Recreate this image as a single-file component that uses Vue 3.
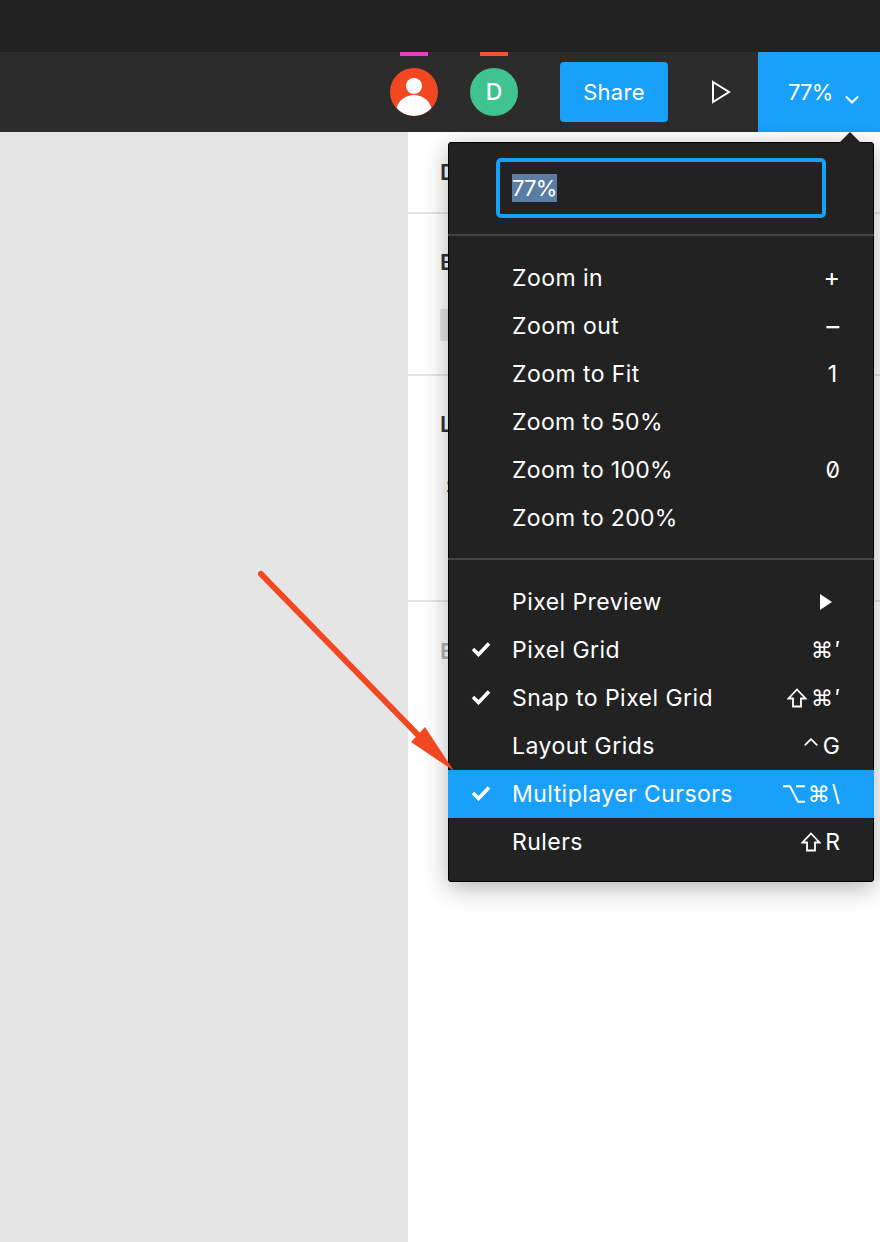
<script setup>
const groupA = [
  { label: 'Zoom in', key: '+', cls: 'op' },
  { label: 'Zoom out', key: '−', cls: 'op minus' },
  { label: 'Zoom to Fit', key: '1', cls: 'one' },
  { label: 'Zoom to 50%', key: '', num: true },
  { label: 'Zoom to 100%', key: '0', cls: 'slashed', num: true },
  { label: 'Zoom to 200%', key: '', num: true },
]
const groupB = [
  { label: 'Pixel Preview', arrow: true },
  { label: 'Pixel Grid', check: true, sym: ['cmd'], key: '′' },
  { label: 'Snap to Pixel Grid', check: true, sym: ['shift', 'cmd'], key: '′' },
  { label: 'Layout Grids', sym: ['ctrl'], key: 'G' },
  { label: 'Multiplayer Cursors', check: true, active: true, sym: ['opt', 'cmd'], key: '\\' },
  { label: 'Rulers', sym: ['shift'], key: 'R' },
]
</script>

<template>
  <div class="page">
    <div class="titlebar"></div>
    <header class="toolbar">
      <div class="avatar-wrap">
        <i class="tab pink"></i>
        <div class="avatar red">
          <svg width="48" height="48" viewBox="0 0 48 48">
            <circle cx="24" cy="18" r="8" fill="#fff" />
            <path d="M6.5 40 C9 32 16 27 24 27 C32 27 39 32 41.5 40 A24 24 0 0 1 24 48 A24 24 0 0 1 6.5 40 Z" fill="#fff" />
          </svg>
        </div>
      </div>
      <div class="avatar-wrap second">
        <i class="tab orange"></i>
        <div class="avatar green">D</div>
      </div>
      <button class="share">Share</button>
      <svg class="play" width="20" height="24" viewBox="0 0 20 24">
        <path d="M2 2 L18 12 L2 22 Z" fill="none" stroke="#fff" stroke-width="2" />
      </svg>
      <div class="zoom-btn">
        <span>77%</span>
        <svg width="14" height="9" viewBox="0 0 14 9"><path d="M1 1.5 L7 7.5 L13 1.5" fill="none" stroke="#fff" stroke-width="2" /></svg>
      </div>
    </header>

    <main class="body">
      <div class="canvas"></div>
      <aside class="panel">
        <section class="sec s1"><b>D</b></section>
        <section class="sec s2"><b>B</b><div class="swatch"></div></section>
        <section class="sec s3"><b>L</b><div class="small">S</div></section>
        <section class="sec s4"><b class="muted">E</b></section>
      </aside>
    </main>

    <div class="menu">
      <i class="caret"></i>
      <div class="input-row">
        <div class="input"><span class="sel">77%</span></div>
      </div>
      <div class="group">
        <div v-for="it in groupA" :key="it.label" class="item">
          <span class="label" :class="{ num: it.num }">{{ it.label }}</span>
          <span class="key" :class="it.cls">{{ it.key }}</span>
        </div>
      </div>
      <div class="group last">
        <div v-for="it in groupB" :key="it.label" class="item" :class="{ active: it.active }">
          <svg v-if="it.check" class="check" width="20" height="16" viewBox="0 0 20 16">
            <path d="M2 8 L7.5 13.5 L18 2.5" fill="none" stroke="#fff" stroke-width="3.6" />
          </svg>
          <span class="label">{{ it.label }}</span>
          <svg v-if="it.arrow" class="tri" width="12" height="16" viewBox="0 0 12 16"><path d="M0 0 L12 8 L0 16 Z" fill="#fff" /></svg>
          <span v-else class="key">
            <template v-for="s in it.sym" :key="s">
              <svg v-if="s === 'shift'" class="ico shift" width="20" height="20" viewBox="0 0 20 20">
                <path d="M10 1.5 L18.5 10.5 H14 V18.5 H6 V10.5 H1.5 Z" fill="none" stroke="#fff" stroke-width="1.8" />
              </svg>
              <svg v-else-if="s === 'ctrl'" class="ico ctrl" width="14" height="8" viewBox="0 0 14 8">
                <path d="M0.7 7.3 L7 1.2 L13.3 7.3" fill="none" stroke="#fff" stroke-width="1.8" />
              </svg>
              <svg v-else-if="s === 'opt'" class="ico opt" width="22" height="18" viewBox="0 0 22 18">
                <path d="M0 1.2 H7 L15 16.8 H22 M13 1.2 H22" fill="none" stroke="#fff" stroke-width="1.9" />
              </svg>
              <span v-else class="sym">⌘</span>
            </template>{{ it.key }}
          </span>
        </div>
      </div>
    </div>

    <svg class="pointer" width="210" height="220" viewBox="0 0 210 220">
      <path d="M5 4 L163 166" stroke="#f24822" stroke-width="6" stroke-linecap="round" fill="none" />
      <path d="M198 201 L155 172 L169 157 Z" fill="#f24822" />
    </svg>
  </div>
</template>

<style>
html, body { margin: 0; background: #fff; }
</style>

<style scoped>
.page {
  position: relative;
  width: 880px;
  height: 1242px;
  overflow: hidden;
  font-family: Inter, "Liberation Sans", sans-serif;
  display: flex;
  flex-direction: column;
}
.titlebar { height: 52px; background: #222; flex: none; }
.toolbar {
  height: 80px;
  flex: none;
  background: #2c2c2c;
  display: flex;
  align-items: center;
  padding-left: 390px;
  box-sizing: border-box;
}
.avatar-wrap { position: relative; width: 48px; height: 48px; }
.avatar-wrap.second { margin-left: 32px; }
.tab { position: absolute; top: -16px; left: 10px; width: 28px; height: 4px; }
.pink { background: #e83fc9; }
.orange { background: #f2552c; }
.avatar { width: 48px; height: 48px; border-radius: 50%; overflow: hidden; display: flex; align-items: center; justify-content: center; color: #fff; font-size: 23px; font-weight: 500; }
.red { background: #f24822; }
.green { background: #40c48f; }
.share {
  margin-left: 42px;
  width: 108px;
  height: 60px;
  border: 0;
  border-radius: 4px;
  background: #18a0fb;
  color: #fff;
  font: 400 22px Inter, sans-serif;
  letter-spacing: 0.3px;
  padding: 0;
}
.play { margin-left: 43px; }
.zoom-btn {
  margin-left: 27px;
  width: 122px;
  height: 80px;
  background: #18a0fb;
  color: #fff;
  font-size: 22px;
  letter-spacing: -0.8px;
  display: flex;
  align-items: center;
  padding-left: 30px;
  box-sizing: border-box;
}
.zoom-btn svg { margin-left: 12px; margin-top: 14px; }

.body { flex: 1; display: flex; }
.canvas { width: 408px; background: #e5e5e5; }
.panel { flex: 1; background: #fff; color: #333; font-size: 22px; }
.panel b { font-weight: 600; }
.sec { border-bottom: 2px solid #e5e5e5; box-sizing: border-box; padding: 27px 0 0 32px; }
.s1 { height: 82px; }
.s2 { height: 162px; padding-top: 35px; }
.s3 { height: 226px; padding-top: 35px; }
.s4 { border: 0; padding-top: 36px; }
.muted { color: #b3b3b3; }
.swatch { width: 60px; height: 32px; background: #e5e5e5; margin-top: 34px; border-radius: 2px; }
.small { margin: 38px 0 0 6px; font-size: 20px; }

.menu {
  position: absolute;
  left: 448px;
  top: 142px;
  width: 426px;
  height: 740px;
  box-sizing: border-box;
  background: #222;
  border: 1px solid #000;
  border-radius: 3px;
  box-shadow: 0 6px 24px rgba(0, 0, 0, 0.3);
  color: #fff;
  font-size: 23px;
  letter-spacing: 0.45px;
}
.caret {
  position: absolute;
  left: 390px;
  top: -11px;
  width: 0;
  height: 0;
  border: 11px solid transparent;
  border-top: 0;
  border-bottom-color: #222;
}
.input-row { height: 76px; border-bottom: 2px solid #444; padding: 15px 0 0 48px; margin: 0 -1px; }
.input {
  width: 330px;
  height: 60px;
  box-sizing: border-box;
  border: 4px solid #18a0fb;
  border-radius: 5px;
  padding: 12px 0 0 12px;
  line-height: 28px;
  font-size: 22px;
  letter-spacing: -0.8px;
}
.sel { display: inline-block; height: 28px; background: #5a7ca5; }
.group { padding: 18px 0 16px; border-bottom: 2px solid #444; margin: 0 -1px; }
.group.last { border: 0; }
.item {
  position: relative;
  height: 48px;
  display: flex;
  align-items: center;
  justify-content: space-between;
  padding: 0 34px 0 64px;
  box-sizing: border-box;
}
.item.active { background: #18a0fb; }
.check { position: absolute; left: 23px; top: 15px; }
.label.num { letter-spacing: 0.32px; }
.key { font-size: 23px; display: flex; align-items: center; letter-spacing: 0; }
.slashed { font-feature-settings: "zero" 1; }
.op { font-size: 25px; margin-bottom: 3px; }
.minus { font-size: 28px; margin-right: -2px; }
.one { margin-right: 3px; }
.sym { font-family: "DejaVu Sans", sans-serif; font-size: 22px; margin-right: 2px; }
.ico { display: block; }
.shift { margin-right: 4px; }
.ctrl { margin-right: 5px; margin-bottom: 8px; }
.opt { margin-right: 3px; }
.tri { margin-right: 8px; }
.pointer { position: absolute; left: 256px; top: 570px; }
</style>
